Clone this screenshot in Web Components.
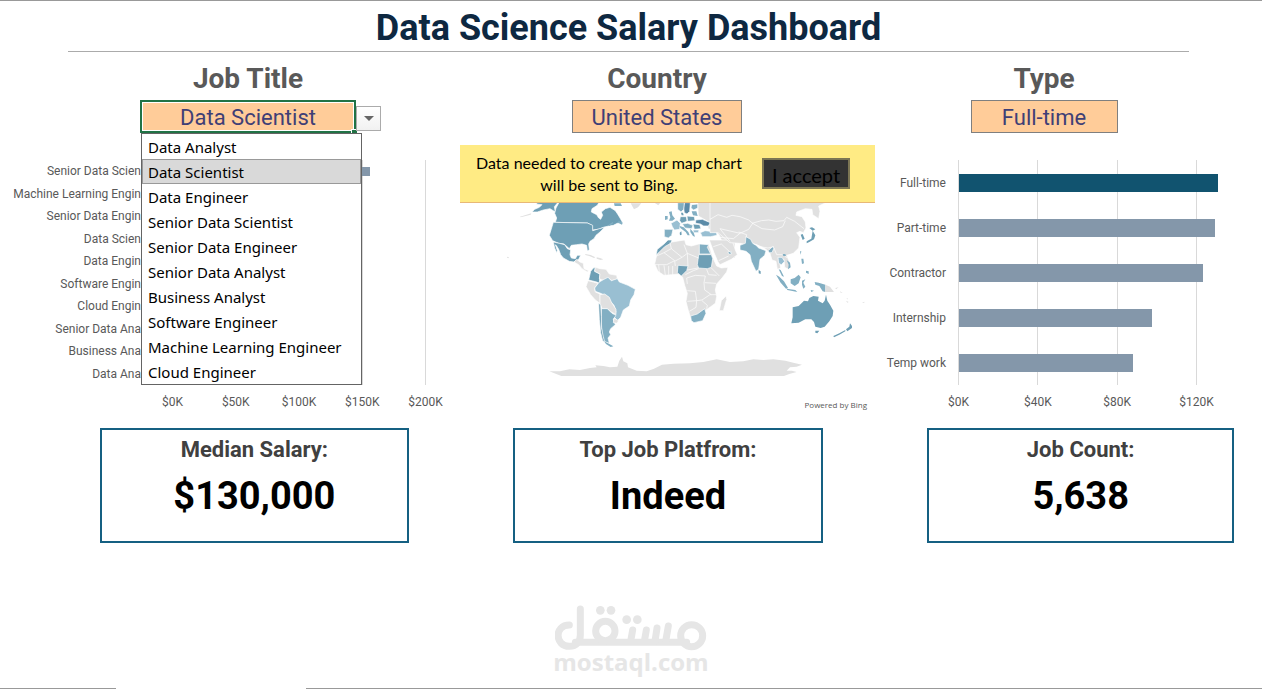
<!DOCTYPE html>
<html lang="en">
<head>
<meta charset="UTF-8">
<meta name="viewport" content="width=device-width, initial-scale=1.0">
<title>Data Science Salary Dashboard</title>
<style>
    body {
        margin: 0;
        background: #fff;
        font-family: Roboto, "Liberation Sans", sans-serif;
    }
</style>
</head>
<body>

<salary-dashboard>
    <filter-cell slot="filters" label="Job Title" value="Data Scientist" width="216" open
        options="Data Analyst,Data Scientist,Data Engineer,Senior Data Scientist,Senior Data Engineer,Senior Data Analyst,Business Analyst,Software Engineer,Machine Learning Engineer,Cloud Engineer"></filter-cell>
    <filter-cell slot="filters" label="Country" value="United States" width="170"></filter-cell>
    <filter-cell slot="filters" label="Type" value="Full-time" width="147"></filter-cell>

    <bar-chart slot="charts" label="Median salary by job title" class="jobs" max="200" step="50" thickness="9"
        data="Senior Data Scien:155,Machine Learning Engin:148,Senior Data Engin:147,Data Scien:130*,Data Engin:125,Software Engin:122,Cloud Engin:116,Senior Data Ana:111,Business Ana:92,Data Ana:90"></bar-chart>
    <country-map slot="charts">
        <span slot="notice">Data needed to create your map chart will be sent to Bing.</span>
    </country-map>
    <bar-chart slot="charts" label="Median salary by schedule type" class="types" max="120" step="40" thickness="18"
        data="Full-time:130*,Part-time:128.5,Contractor:122.5,Internship:97,Temp work:87.5"></bar-chart>

    <kpi-card slot="kpis" label="Median Salary:">$130,000</kpi-card>
    <kpi-card slot="kpis" label="Top Job Platfrom:">Indeed</kpi-card>
    <kpi-card slot="kpis" label="Job Count:">5,638</kpi-card>
</salary-dashboard>

<script>
class SalaryDashboard extends HTMLElement {
    constructor() {
        super();
        this.attachShadow({ mode: 'open' });
    }

    connectedCallback() {
        this.shadowRoot.innerHTML = `
            <style>
                :host {
                    display: flex;
                    flex-direction: column;
                    min-height: 100vh;
                    box-sizing: border-box;
                    border-top: 1px solid #999;
                }

                h1 {
                    margin: 0 73px 0 68px;
                    height: 50px;
                    line-height: 54px;
                    border-bottom: 1px solid #ababab;
                    color: #0e2841;
                    font-size: 36px;
                    font-weight: 700;
                    text-align: center;
                }

                .row {
                    display: grid;
                }

                .filters {
                    grid-template-columns: 404fr 414fr 360fr;
                    padding: 8px 38px 0 46px;
                }

                .charts {
                    grid-template-columns: 450fr 430fr 382fr;
                    padding-top: 12px;
                }

                .charts ::slotted(bar-chart) {
                    margin-top: 15px;
                }

                /* the open list covers the space between these names and the axis */
                .charts ::slotted(.jobs) {
                    --label-width: 141px;
                    --label-gap: 31px;
                    padding-right: 24px;
                }

                .charts ::slotted(.types) {
                    --label-width: 66px;
                    --label-gap: 12px;
                    padding-right: 65px;
                }

                .kpis {
                    grid-template-columns: 309fr 311fr 307fr;
                    gap: 104px;
                    padding: 16px 28px 0 100px;
                }

                footer {
                    display: flex;
                    flex-direction: column;
                    align-items: center;
                    margin-top: auto;
                }

                .edge {
                    display: flex;
                    justify-content: space-between;
                    width: 100%;
                    height: 1px;
                    margin-top: 15px;
                }

                .edge i {
                    background: #999;
                    flex: 956;
                }

                .edge i:first-child {
                    flex: 116;
                    margin-right: 190px;
                }
            </style>

            <h1>Data Science Salary Dashboard</h1>
            <main>
                <section class="row filters"><slot name="filters"></slot></section>
                <section class="row charts"><slot name="charts"></slot></section>
                <section class="row kpis"><slot name="kpis"></slot></section>
            </main>
            <footer>
                <mostaql-mark></mostaql-mark>
                <div class="edge"><i></i><i></i></div>
            </footer>
        `;
    }
}

class FilterCell extends HTMLElement {
    constructor() {
        super();
        this.attachShadow({ mode: 'open' });
    }

    connectedCallback() {
        this._value = this.getAttribute('value');
        this._options = (this.getAttribute('options') || this._value).split(',');
        this.render();
    }

    render() {
        const open = this.hasAttribute('open');
        const label = this.getAttribute('label');

        this.shadowRoot.innerHTML = `
            <style>
                :host {
                    display: flex;
                    flex-direction: column;
                    align-items: center;
                }

                label {
                    height: 40px;
                    color: #595959;
                    font-size: 28px;
                    font-weight: 700;
                    line-height: 38px;
                }

                .cell {
                    position: relative;
                    width: ${this.getAttribute('width')}px;
                    height: 33px;
                }

                .value {
                    appearance: none;
                    box-sizing: border-box;
                    width: 100%;
                    height: 100%;
                    margin: 0;
                    padding: 2px 0 0;
                    border: 1px solid #7f7f7f;
                    border-radius: 0;
                    background: #ffcc99;
                    color: #3f3f76;
                    font-family: inherit;
                    font-size: 22px;
                    line-height: 28px;
                    text-align: center;
                    text-align-last: center;
                }

                .open .value {
                    border: 2px solid #217346;
                    box-shadow: inset 0 0 0 1px #fff;
                }

                /* fill handle and drop-down arrow hang off the selected cell */
                .handle {
                    position: absolute;
                    right: -1px;
                    bottom: -1px;
                    width: 5px;
                    height: 4px;
                    border: solid #fff;
                    border-width: 1px 0 0 1px;
                    background: #217346;
                }

                .arrow {
                    position: absolute;
                    left: 100%;
                    top: 6px;
                    width: 25px;
                    height: 25px;
                    padding: 0;
                    border: 1px solid #ababab;
                    background: linear-gradient(#fff, #f1f1f1);
                }

                .arrow svg {
                    display: block;
                    margin: auto;
                }

                ul {
                    position: absolute;
                    z-index: 2;
                    left: 1px;
                    top: 100%;
                    box-sizing: border-box;
                    width: 221px;
                    margin: 0;
                    padding: 0;
                    border: 1px solid #646464;
                    background: #fff;
                    list-style: none;
                }

                li {
                    box-sizing: border-box;
                    height: 25px;
                    padding: 0 5px;
                    border: 1px solid transparent;
                    color: #000;
                    font-family: "Noto Sans", "Open Sans", sans-serif;
                    font-size: 15px;
                    line-height: 24px;
                    white-space: nowrap;
                }

                li[aria-selected="true"] {
                    border-color: #999;
                    background: #d9d9d9;
                }
            </style>

            <label for="value">${label}</label>
            <div class="cell ${open ? 'open' : ''}">
                ${open ? `
                    <button id="value" class="value" aria-haspopup="listbox" aria-expanded="true">${this._value}</button>
                    <span class="handle"></span>
                    <button class="arrow" aria-label="Show ${label} list">
                        <svg width="10" height="6"><path d="M0 0h10L5 5z" fill="#666"/></svg>
                    </button>
                    <ul role="listbox" aria-label="${label}">
                        ${this._options.map(o => `<li role="option" aria-selected="${o === this._value}">${o}</li>`).join('')}
                    </ul>
                ` : `
                    <select id="value" class="value">
                        ${this._options.map(o => `<option>${o}</option>`).join('')}
                    </select>
                `}
            </div>
        `;

        this.shadowRoot.querySelectorAll('li').forEach(item => {
            item.addEventListener('click', () => {
                this._value = item.textContent;
                this.render();
            });
        });
    }
}

class BarChart extends HTMLElement {
    constructor() {
        super();
        this.attachShadow({ mode: 'open' });
    }

    connectedCallback() {
        const max = Number(this.getAttribute('max'));
        const step = Number(this.getAttribute('step'));
        const ticks = [];
        for (let t = 0; t <= max; t += step) ticks.push(t);

        // "name:value", with a trailing * on the highlighted bar
        const rows = this.getAttribute('data').split(',').map(item => {
            const [name, value] = item.split(':');
            return { name, value: parseFloat(value), active: value.endsWith('*') };
        });

        this.shadowRoot.innerHTML = `
            <style>
                :host {
                    display: block;
                    color: #595959;
                    font-size: 12px;
                }

                figure {
                    display: grid;
                    grid-template-columns: var(--label-width) 1fr;
                    column-gap: var(--label-gap);
                    margin: 0;
                }

                .names, .bars {
                    display: flex;
                    flex-direction: column;
                    height: 225px;
                }

                .names span, .bars span {
                    display: flex;
                    flex: 1;
                    align-items: center;
                }

                .names span {
                    justify-content: flex-end;
                    white-space: nowrap;
                }

                .plot {
                    display: grid;
                }

                .bars, .lines {
                    grid-area: 1 / 1;
                    min-width: 0;
                }

                .lines {
                    display: flex;
                    justify-content: space-between;
                }

                .lines i {
                    width: 1px;
                    background: #d9d9d9;
                }

                /* bars may run past the last gridline */
                .bars i {
                    flex-shrink: 0;
                    height: ${this.getAttribute('thickness')}px;
                    margin-left: 1px;
                    background: #8497aa;
                }

                .bars i.active {
                    background: #11536f;
                }

                .ticks {
                    display: flex;
                    grid-column: 2;
                    justify-content: space-between;
                    padding-top: 7px;
                    line-height: 20px;
                }

                .ticks span {
                    display: flex;
                    justify-content: center;
                    width: 1px;
                }
            </style>

            <figure aria-label="${this.getAttribute('label')}">
                <div class="names">${rows.map(r => `<span>${r.name}</span>`).join('')}</div>
                <div class="plot">
                    <div class="lines">${ticks.map(() => '<i></i>').join('')}</div>
                    <div class="bars">
                        ${rows.map(r => `<span><i class="${r.active ? 'active' : ''}" style="width: ${r.value / max * 100}%"></i></span>`).join('')}
                    </div>
                </div>
                <div class="ticks">${ticks.map(t => `<span>$${t}K</span>`).join('')}</div>
            </figure>
        `;
    }
}

class CountryMap extends HTMLElement {
    constructor() {
        super();
        this.attachShadow({ mode: 'open' });
    }

    connectedCallback() {
        this.shadowRoot.innerHTML = `
            <style>
                :host {
                    display: block;
                    padding: 0 5px 0 10px;
                }

                .notice {
                    display: flex;
                    align-items: center;
                    box-sizing: border-box;
                    height: 58px;
                    padding: 0 25px 0 4px;
                    border-bottom: 1px solid #e8b877;
                    background: #ffeb84;
                    color: #000;
                    font-family: Lato, sans-serif;
                }

                p {
                    flex: 1;
                    margin: 0 8px 0 0;
                    font-size: 16px;
                    line-height: 22px;
                    text-align: center;
                }

                button {
                    width: 88px;
                    height: 31px;
                    padding: 0;
                    border: 2px solid #7c7654;
                    border-radius: 0;
                    background: #333;
                    color: #000;
                    font-family: inherit;
                    font-size: 20px;
                    line-height: 30px;
                    white-space: nowrap;
                }

                svg {
                    display: block;
                    width: 100%;
                }

                .none { fill: #e0e0e0; }
                .low { fill: #99bfd2; }
                .mid { fill: #82afc3; }
                .high { fill: #6e9fb5; }
                .top { fill: #5b8ba8; }
                .land path { stroke: #fff; stroke-width: 2; stroke-linejoin: round; }
                .islands path { stroke: none; }
                .borders path { fill: none; stroke: #fff; stroke-width: 2; }

                small {
                    display: block;
                    padding: 21px 8px 0 0;
                    color: #595959;
                    font-family: "Open Sans", sans-serif;
                    font-size: 8px;
                    line-height: 12px;
                    text-align: right;
                }
            </style>

            <div class="notice">
                <p><slot name="notice"></slot></p>
                <button>I accept</button>
            </div>
            <svg viewBox="460 203 415 175" role="img" aria-label="Median salary by country">
                <!-- Americas -->
                <g class="land" transform="translate(500 190) scale(.33333)">
                    <path class="high" d="M96 66L104 58 118 52 126 44 108 42 122 30 180 30 163 50 166 66 150 56 130 60 112 66Z"/>
                    <path class="high" d="M180 32H300L292 46 276 56 274 66 290 74 296 84 302 88 308 76 304 66 316 56 330 52 346 62 354 74 360 84 368 98 352 100 340 106 326 108 310 112 296 118 278 120 276 106 262 99 166 97 170 84 164 70 168 54Z"/>
                    <path class="high" d="M160 97L262 99 278 106 278 122 298 116 314 112 300 126 288 136 282 146 270 154 266 162 268 180 262 182 260 166 246 162 230 164 214 166 208 176 192 162 176 160 158 152 148 136Z"/>
                    <path class="high" d="M160 156L178 160 194 164 202 176 212 180 210 194 214 204 226 206 232 196 242 196 236 208 222 216 208 214 190 204 182 194 176 178 170 168 166 164 172 182 170 188 164 174Z"/>
                    <path class="none" d="M222 216L230 208 240 216 250 220 252 236 266 242 262 246 246 236 236 224Z"/>
                    <path class="high" d="M280 234L286 232 284 244 300 252 298 280 290 276 266 270 272 244Z"/>
                    <path class="none" d="M286 232L300 236 318 238 328 252 350 256 352 268 336 272 326 264 314 270 306 270 298 266 300 252 284 244Z"/>
                    <path class="none" d="M264 272L280 276 294 280 284 294 286 306 300 312 300 326 300 340 286 330 272 314 258 290Z"/>
                    <path class="low" d="M298 276L312 268 324 262 334 272 352 266 358 276 384 286 406 298 402 314 392 330 388 348 370 360 362 382 352 392 340 378 348 366 342 346 330 334 326 322 302 310 286 304 284 294Z"/>
                    <path class="none" d="M300 314L314 312 328 322 334 336 348 358 348 374 334 366 322 356 306 356 300 340Z"/>
                    <path class="mid" d="M304 356L322 356 336 370 348 376 340 388 346 404 332 416 328 426 332 434 324 444 328 460 312 454 306 430 304 396Z"/>
                    <path class="high" d="M296 340L302 344 304 380 304 412 310 440 314 456 308 452 302 428 298 388Z"/>
                    <path class="none" d="M342 384L356 392 350 400 340 398Z"/>
                </g>
                <g class="islands" transform="translate(500 190) scale(.33333)">
                    <path class="mid" d="M312 454L324 460 340 469 332 471 318 462ZM342 40H362L366 48H344ZM356 92L368 98 366 104 354 98ZM326 104l12-8 2 4-12 8Z"/>
                    <path class="none" d="M256 192l16 3 14 7-4 2-14-6-12-3ZM290 202l10 2 10 4-8 2-12-4ZM22 200l5 2-2 3-4-2ZM60 80l34-10-2 4-30 8ZM392 40H424L414 52 402 58Z"/>
                    <path class="none" d="M148 544L180 544 208 538 240 540 270 534 290 532 286 526 310 528 330 532 352 530 358 512 366 500 370 514 382 520 384 532 410 542 440 544 462 536 486 524 520 521 570 520 610 516 650 508 690 516 730 514 760 508 790 510 820 508 856 512 880 518 906 524 890 530 870 532 860 542 876 542 890 546 868 552 852 558H184Z"/>
                </g>

                <!-- Europe -->
                <g transform="translate(645 198) scale(.33333)">
                    <g class="land">
                        <path class="none" d="M158 12H270V180H225L240 150 222 110 210 100 190 92 188 70 160 54Z"/>
                        <path class="top" d="M118 14H136L134 40 126 48 118 44 116 30Z"/>
                        <path class="mid" d="M98 14H118L116 34 108 42 98 34Z"/>
                        <path class="mid" d="M140 20L158 18 158 30 146 36 138 30Z"/>
                        <path class="low" d="M78 76L96 66 106 76 104 94 88 96 82 86Z"/>
                        <path class="mid" d="M58 94L84 94 80 112 70 120 58 116Z"/>
                        <path class="high" d="M106 56L124 56 126 70 110 76 104 68Z"/>
                        <path class="high" d="M126 54L148 56 150 68 128 70Z"/>
                        <path class="top" d="M152 66L172 64 196 74 190 84 176 84 166 78 152 76Z"/>
                        <path class="mid" d="M112 78L128 76 144 82 140 92 120 90Z"/>
                        <path class="high" d="M144 78L164 80 168 92 148 94Z"/>
                        <path class="low" d="M166 104L180 98 214 102 216 112 196 116 172 116Z"/>
                        <path class="low" d="M144 96L162 96 160 104 146 104Z"/>
                    </g>
                    <g class="islands">
                        <path class="mid" d="M72 42l8-2 2 12 8 10-8 6-10 0 4-10ZM60 54l8 0 0 10-8 2ZM104 84l12 4 14 14 4 10-6 0-6-10-16-12ZM136 92l10 12 4 12-6-2-8-12ZM140 40l14 0 4 14-14-2Z"/>
                        <path class="high" d="M108 44l6 0 2 8-6 0ZM104 104l5-4 1 10-5 2Z"/>
                        <path class="none" d="M28 14H46L40 22Z"/>
                    </g>
                </g>

                <!-- Africa and Arabia -->
                <g class="land" transform="translate(650 240) scale(.33333)">
                    <path class="none" d="M42 14L66 6 90 2 104 0 108 14 124 18 146 12 176 14 182 32 188 52 200 78 214 84 234 82 230 96 216 114 200 132 196 150 200 170 196 190 182 200 168 210 150 222 132 236 124 240 114 208 108 184 112 160 104 136 98 112 88 102 64 104 42 106 24 94 14 72 20 46Z"/>
                    <path class="high" d="M42 12L54 0H66L62 10 44 20 30 34 18 46 22 28Z"/>
                    <path class="mid" d="M148 12L176 14 172 22 182 42 148 42Z"/>
                    <path class="high" d="M146 44L184 44 188 56 184 82 172 86 146 84 142 74Z"/>
                    <path class="high" d="M84 76L114 78 110 92 94 108 82 98Z"/>
                    <path class="mid" d="M122 228L142 222 164 206 168 220 158 242 132 248 124 242Z"/>
                    <path class="none" d="M178 0H246L256 30 262 44 244 58 210 74 204 66 192 38Z"/>
                    <path class="none" d="M214 182L228 168 230 178 220 212 208 212Z"/>
                    <path class="high" d="M234 36l10-2 0 8-8 0Z"/>
                </g>
                <g class="borders" transform="translate(650 240) scale(.33333)">
                    <path d="M60 8L64 26 42 38 20 48M42 38L74 62 50 74 14 74M64 26L96 52 74 64 76 78M96 52L112 40 102 14M112 40L146 54M112 40L114 78M112 90L144 84M106 104L130 92 146 86M184 84L208 108M170 88L176 104 200 106M112 132L110 114 136 106 166 108M166 108L162 128 164 150 184 164M112 152L136 154 140 182 112 184M140 182L156 180 180 164 198 164M140 182L138 202 118 214M156 182L172 196 170 206M164 128L198 130M26 74L28 98M42 76L46 106M56 78V104M68 78V104M190 20L214 12 244 40M206 62L236 48"/>
                </g>

                <!-- Asia -->
                <g transform="translate(740 198) scale(.33333)">
                    <g class="land">
                        <path class="none" d="M-90 12H262L236 24 240 40 236 62 218 50 216 34 196 32 170 42 168 52 186 56 196 72 198 90 190 104 180 100 170 104 180 118 176 150 160 166 140 172 150 196 146 214 134 208 132 184 118 186 122 210 112 214 108 190 96 186 90 166 76 152 50 140 20 140 0 136 -30 134 -66 104 -90 104Z"/>
                        <path class="mid" d="M0 142L16 136 18 116 32 124 38 136 48 142 56 150 78 158 74 172 60 184 56 214 48 220 34 190 30 170 18 160 0 156Z"/>
                        <path class="mid" d="M84 158L98 146 102 150 96 164 88 164Z"/>
                        <path class="low" d="M114 178L126 178 134 190 124 200 116 196Z"/>
                    </g>
                    <g class="borders">
                        <path d="M-90 64L-66 50 -40 58 -24 52 0 56 26 66 38 76 26 94 0 106 -60 92 -30 130M36 76L64 68 86 66 108 70 132 68 140 58 164 70 192 92M38 76L66 92 104 96 128 86 136 68M-4 102L20 110 18 118M-60 118L-20 122 0 106M40 136L60 146 84 150 102 146M102 150L110 170 134 170 140 180"/>
                    </g>
                    <g class="islands">
                        <path class="high" d="M182 110l6-2 6 14-6 4ZM208 90l8-2 10 6-8 4ZM218 98l8 14-4 12-14 8-8 4 0-6 14-8ZM56 216l6 4 0 8-6-2Z"/>
                        <path class="mid" d="M108 230l10 6 14 14 12 20-6 2-16-18ZM140 272l26 4 6 6-30-6ZM152 244l12-4 12-10 6 8-6 18-12 8-12-8ZM186 248l10-4-6 10 6 12-6 6-4-12ZM184 182l6 0 2 14-6 2ZM180 160l4 0-2 10ZM198 218l8 2 0 8-8-4ZM116 214l6 2 10 20-6-2ZM140 186l10 8 2 14-8 6 2-14ZM224 252l12 2 20 6 0 22-8-2-10-16-12-4ZM212 276l10 2-8 4ZM128 168l8 0 2 6-8 0Z"/>
                        <path class="none" d="M256 260l14 6 12 16-12 0-14 0ZM286 270l10-2-8 6ZM300 280l8 4-6 0ZM320 300l5 3-4 1Z"/>
                    </g>
                </g>

                <!-- Oceania -->
                <g class="islands" transform="translate(680 190) scale(.33333)">
                    <path class="high" d="M338 352L356 348 372 332 384 334 388 324 400 318 416 320 414 332 428 340 434 332 438 314 442 332 450 344 460 362 458 378 448 394 434 410 422 414 406 410 402 396 394 388 376 388 356 398 334 400 338 382ZM406 422l12 0-6 8-6-2ZM460 438l18-8 18-10 0 4-18 10-16 8ZM498 418l10-8 2-10 6 8 0 6-14 10Z"/>
                    <path class="none" d="M498 332l8 4-4 2ZM546 338l8-3-2 4Z"/>
                </g>
            </svg>
            <small>Powered by Bing</small>
        `;
    }
}

class KpiCard extends HTMLElement {
    constructor() {
        super();
        this.attachShadow({ mode: 'open' });
    }

    connectedCallback() {
        this.shadowRoot.innerHTML = `
            <style>
                :host {
                    display: block;
                    box-sizing: border-box;
                    padding: 4px 0 15px;
                    border: 2px solid #156082;
                    text-align: center;
                }

                h2 {
                    margin: 0;
                    color: #404040;
                    font-size: 22px;
                    font-weight: 700;
                    line-height: 32px;
                }

                p {
                    margin: 0;
                    color: #000;
                    font-size: 38px;
                    font-weight: 700;
                    line-height: 60px;
                }
            </style>

            <h2>${this.getAttribute('label')}</h2>
            <p><slot></slot></p>
        `;
    }
}

class MostaqlMark extends HTMLElement {
    constructor() {
        super();
        this.attachShadow({ mode: 'open' });
    }

    connectedCallback() {
        this.shadowRoot.innerHTML = `
            <style>
                :host {
                    display: flex;
                    flex-direction: column;
                    align-items: center;
                    color: #e6e6e6;
                    font-family: "Open Sans", sans-serif;
                    font-size: 24px;
                    font-weight: 700;
                    line-height: 22px;
                }

                svg {
                    display: block;
                }
            </style>

            <svg width="152" height="46" viewBox="75 43 456 138" role="img" aria-label="مستقل">
                <g fill="none" stroke="currentColor" stroke-width="21" stroke-linecap="round">
                    <path d="M118 103C72 103 74 167 118 167 140 167 151 154 151 132V55M136 155H470"/>
                    <circle cx="226" cy="121" r="29"/>
                    <circle cx="485" cy="135" r="33"/>
                    <path d="M308 118L302 152M349 118L343 152M381 112L375 152M415 106L407 152"/>
                </g>
                <g fill="currentColor">
                    <circle cx="211" cy="59" r="13"/>
                    <circle cx="243" cy="59" r="13"/>
                    <circle cx="290" cy="87" r="13"/>
                    <circle cx="322" cy="87" r="13"/>
                </g>
            </svg>
            <span>mostaql.com</span>
        `;
    }
}

customElements.define('salary-dashboard', SalaryDashboard);
customElements.define('filter-cell', FilterCell);
customElements.define('bar-chart', BarChart);
customElements.define('country-map', CountryMap);
customElements.define('kpi-card', KpiCard);
customElements.define('mostaql-mark', MostaqlMark);
</script>
</body>
</html>
